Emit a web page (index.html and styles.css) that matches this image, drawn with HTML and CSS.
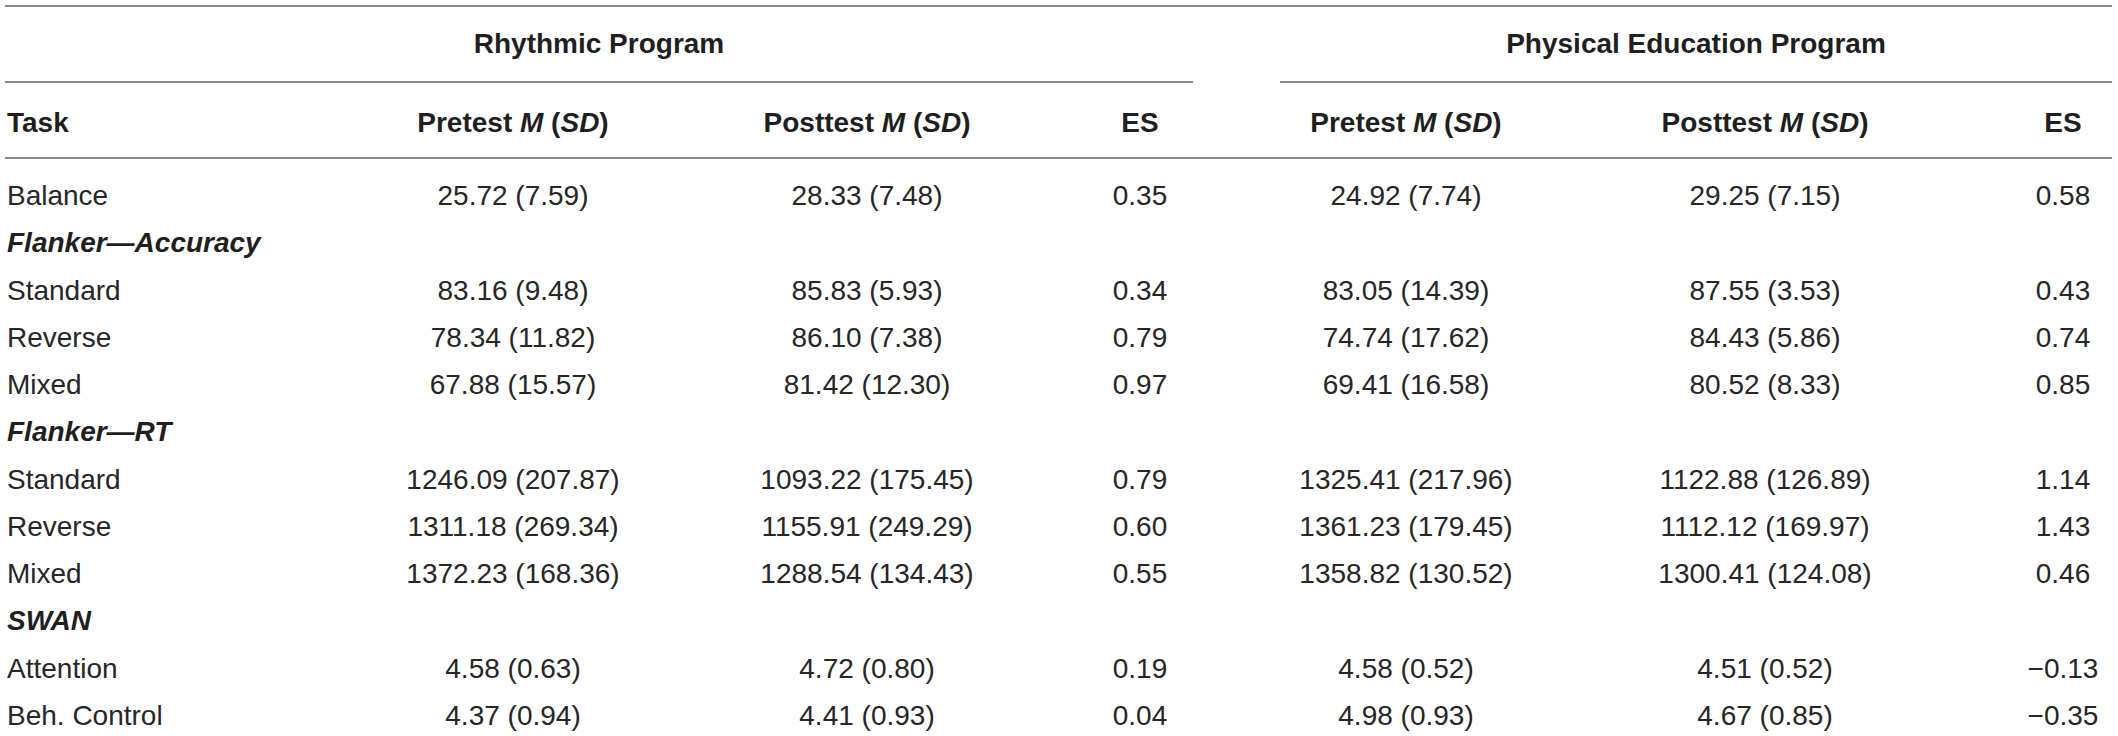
FILE: index.html
```html
<!DOCTYPE html>
<html lang="en">
<head>
<meta charset="utf-8">
<title>Rhythmic vs Physical Education Program</title>
<link rel="stylesheet" href="styles.css">
</head>
<body>
<table class="results">
  <colgroup>
    <col class="c-task">
    <col class="c-pre1">
    <col class="c-post1">
    <col class="c-es1">
    <col class="c-gap">
    <col class="c-pre2">
    <col class="c-post2">
    <col class="c-es2">
  </colgroup>
  <thead>
    <tr class="group-row">
      <th colspan="4" class="group">Rhythmic Program</th>
      <th class="gap"></th>
      <th colspan="3" class="group">Physical Education Program</th>
    </tr>
    <tr class="head-row">
      <th class="task">Task</th>
      <th>Pretest <i>M</i> (<i>SD</i>)</th>
      <th>Posttest <i>M</i> (<i>SD</i>)</th>
      <th>ES</th>
      <th class="gap"></th>
      <th>Pretest <i>M</i> (<i>SD</i>)</th>
      <th>Posttest <i>M</i> (<i>SD</i>)</th>
      <th class="es2">ES</th>
    </tr>
  </thead>
  <tbody>
    <tr class="first">
      <td class="task">Balance</td><td>25.72 (7.59)</td><td>28.33 (7.48)</td><td>0.35</td><td></td><td>24.92 (7.74)</td><td>29.25 (7.15)</td><td class="es2">0.58</td>
    </tr>
    <tr class="cat">
      <td class="task">Flanker—Accuracy</td><td></td><td></td><td></td><td></td><td></td><td></td><td></td>
    </tr>
    <tr>
      <td class="task">Standard</td><td>83.16 (9.48)</td><td>85.83 (5.93)</td><td>0.34</td><td></td><td>83.05 (14.39)</td><td>87.55 (3.53)</td><td class="es2">0.43</td>
    </tr>
    <tr>
      <td class="task">Reverse</td><td>78.34 (11.82)</td><td>86.10 (7.38)</td><td>0.79</td><td></td><td>74.74 (17.62)</td><td>84.43 (5.86)</td><td class="es2">0.74</td>
    </tr>
    <tr>
      <td class="task">Mixed</td><td>67.88 (15.57)</td><td>81.42 (12.30)</td><td>0.97</td><td></td><td>69.41 (16.58)</td><td>80.52 (8.33)</td><td class="es2">0.85</td>
    </tr>
    <tr class="cat">
      <td class="task">Flanker—RT</td><td></td><td></td><td></td><td></td><td></td><td></td><td></td>
    </tr>
    <tr>
      <td class="task">Standard</td><td>1246.09 (207.87)</td><td>1093.22 (175.45)</td><td>0.79</td><td></td><td>1325.41 (217.96)</td><td>1122.88 (126.89)</td><td class="es2">1.14</td>
    </tr>
    <tr>
      <td class="task">Reverse</td><td>1311.18 (269.34)</td><td>1155.91 (249.29)</td><td>0.60</td><td></td><td>1361.23 (179.45)</td><td>1112.12 (169.97)</td><td class="es2">1.43</td>
    </tr>
    <tr>
      <td class="task">Mixed</td><td>1372.23 (168.36)</td><td>1288.54 (134.43)</td><td>0.55</td><td></td><td>1358.82 (130.52)</td><td>1300.41 (124.08)</td><td class="es2">0.46</td>
    </tr>
    <tr class="cat">
      <td class="task">SWAN</td><td></td><td></td><td></td><td></td><td></td><td></td><td></td>
    </tr>
    <tr>
      <td class="task">Attention</td><td>4.58 (0.63)</td><td>4.72 (0.80)</td><td>0.19</td><td></td><td>4.58 (0.52)</td><td>4.51 (0.52)</td><td class="es2">−0.13</td>
    </tr>
    <tr>
      <td class="task">Beh. Control</td><td>4.37 (0.94)</td><td>4.41 (0.93)</td><td>0.04</td><td></td><td>4.98 (0.93)</td><td>4.67 (0.85)</td><td class="es2">−0.35</td>
    </tr>
  </tbody>
</table>
</body>
</html>
```

FILE: styles.css
```css
html, body {
  margin: 0;
  padding: 0;
  background: #ffffff;
}

body {
  font-family: "Liberation Sans", Arial, sans-serif;
  font-size: 28px;
  color: #262626;
}

.results {
  margin: 5px 0 0 5px;
  width: 2107px;
  table-layout: fixed;
  border-collapse: separate;
  border-spacing: 0;
}

.c-task { width: 374px; }
.c-pre1 { width: 268px; }
.c-post1 { width: 440px; }
.c-es1 { width: 106px; }
.c-gap { width: 87px; }
.c-pre2 { width: 252px; }
.c-post2 { width: 466px; }
.c-es2 { width: 114px; }

.results th,
.results td {
  padding: 0;
  text-align: center;
  white-space: nowrap;
  vertical-align: middle;
}

.results th {
  font-weight: 700;
  color: #1f1f1f;
}

.results th i {
  font-style: italic;
}

.group-row th {
  border-top: 2px solid #8a8a8a;
  border-bottom: 2px solid #8a8a8a;
  line-height: 74px;
}

.group-row th.gap {
  border-bottom: 2px solid transparent;
}

.head-row th {
  border-bottom: 2px solid #8a8a8a;
  padding-top: 6px;
  line-height: 68px;
}

.results .task {
  text-align: left;
  padding-left: 2px;
}

.results .es2 {
  padding-left: 16px;
}

.results td {
  line-height: 47.25px;
}

.results tr.first td {
  padding-top: 13px;
}

.results tr.cat td.task {
  font-weight: 700;
  font-style: italic;
  color: #1f1f1f;
}
```
